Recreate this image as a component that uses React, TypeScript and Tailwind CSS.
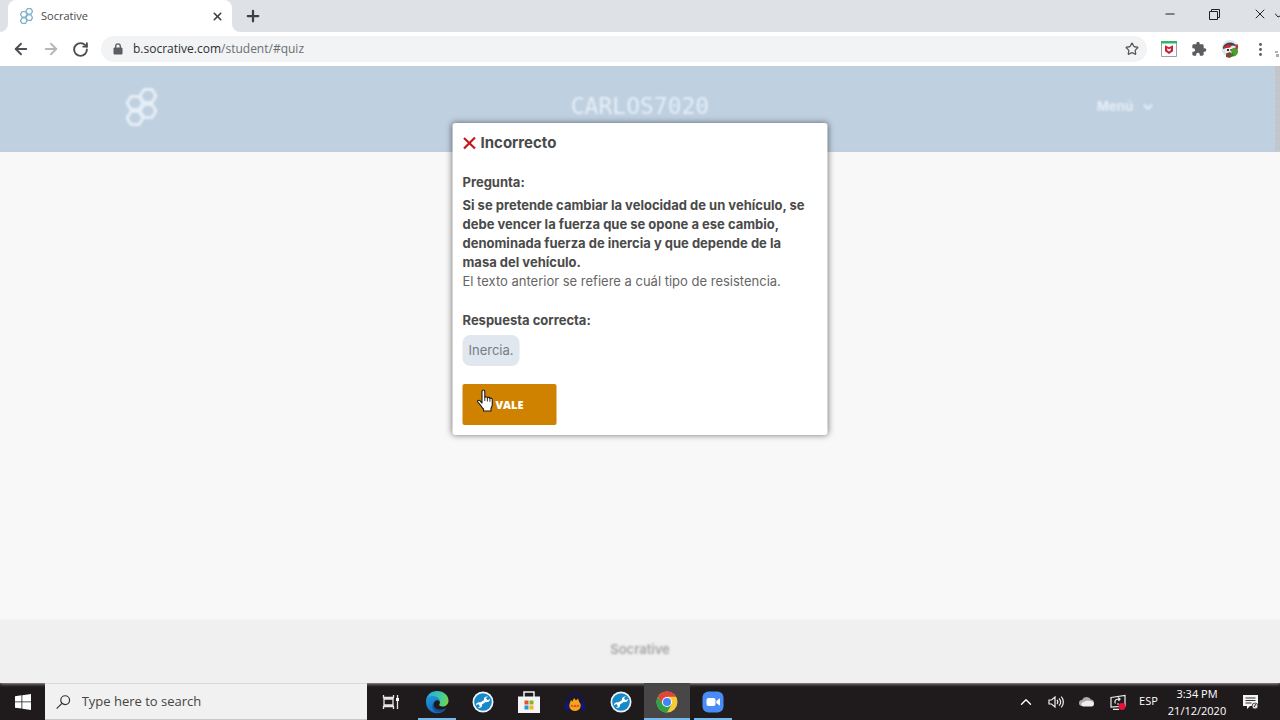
import type { ReactNode } from 'react';
import { ArrowLeft, ArrowRight, ChevronDown, ChevronUp, Minus, Plus, RotateCw, Star, X } from 'lucide-react';

const HexLogo = ({ className }: { className: string }) => {
  const cells = [
    { x: 22, y: 8 },
    { x: 9, y: 15 },
    { x: 22, y: 23 },
    { x: 9, y: 30 }
  ];
  return (
    <svg viewBox="0 0 31 38" className={className} fill="none" stroke="currentColor" strokeWidth="3" strokeLinejoin="round">
      {cells.map((cell, index) => (
        <path key={index} d={`M${cell.x - 4} ${cell.y - 6.5}h8l4 6.5-4 6.5h-8l-4-6.5z`} />
      ))}
    </svg>
  );
};

const EdgeIcon = () => (
  <svg viewBox="0 0 24 24" className="size-6">
    <defs>
      <linearGradient id="edgeTop" x1="0" y1="0.3" x2="1" y2="0.5">
        <stop offset="0" stopColor="#2ba6dc" />
        <stop offset="0.55" stopColor="#38c5b0" />
        <stop offset="1" stopColor="#6fd650" />
      </linearGradient>
      <linearGradient id="edgeLow" x1="0" y1="0" x2="0.6" y2="1">
        <stop offset="0" stopColor="#1c9ade" />
        <stop offset="1" stopColor="#1665b8" />
      </linearGradient>
    </defs>
    <path d="M1 11C1.500 5 6 1 12 1c7 0 11.500 4.500 11.500 9.500 0 4-3 6-6 6-2.500 0-4-1-3-2.500 1-1.300.5-5-4-5C7 9 2 8 1 11z" fill="url(#edgeTop)" />
    <path d="M1 12c0-4 3-6 6.500-6 4.500 0 7.500 3 7.500 6C13.500 9.500 9.500 9.500 8.500 14c-.3 5 4 6.500 8 6 2-.3 3.500-1 5-2-2 3.500-5.500 5.200-9.500 5.200C5.500 23.200 1 18 1 12z" fill="url(#edgeLow)" />
    <path d="M8.500 13.500c-.5 5.500 6 8 13 4.500-3 3.800-7.500 5.300-11 3.500-3.500-2.500-4.500-7.500-.5-10.500-1 .8-1.400 1.500-1.500 2.500z" fill="#12509a" />
  </svg>
);

const WrenchIcon = () => (
  <svg viewBox="0 0 22 22" className="size-[22px]">
    <circle cx="11" cy="11" r="10.500" fill="#f2f6f8" />
    <circle cx="11" cy="11" r="8.800" fill="#1789c9" />
    <path d="M7 13.800 15 8.700" stroke="#fff" strokeWidth="2.600" />
    <path d="M18 7.800 15.800 9.300 14 8.800 13.900 7l2.200-1.500c-2.300-.5-4.300.8-4.200 2.900.1 1.900 1.700 3 3.500 2.700 1.700-.3 2.700-1.600 2.600-3.300z" fill="#fff" />
    <path d="M4 14.500 6.200 13l1.800.5.100 1.800-2.200 1.500c2.300.5 4.300-.8 4.200-2.900-.1-1.900-1.700-3-3.500-2.700-1.700.3-2.700 1.600-2.600 3.300z" fill="#fff" />
  </svg>
);

const StoreIcon = () => (
  <svg viewBox="0 0 22 24" className="h-6 w-[22px]">
    <path d="M6 7V2h10v5" fill="none" stroke="#f4f4f4" strokeWidth="1.500" />
    <path d="M0 6.500h22V23H0z" fill="#f4f4f4" />
    <path d="M6.500 10.500h4v4h-4z" fill="#e8502a" />
    <path d="M11.500 10.500h4v4h-4z" fill="#7cb928" />
    <path d="M6.500 15.500h4v4h-4z" fill="#2399d8" />
    <path d="M11.500 15.500h4v4h-4z" fill="#f5b81c" />
  </svg>
);

const HeadphonesIcon = () => (
  <svg viewBox="0 0 22 20" className="h-5 w-[22px]">
    <path d="M4 14C2 6 6 2 11 2s9 4 7 12" fill="none" stroke="#12126a" strokeWidth="1.600" />
    <rect x="1" y="10" width="4" height="9" rx="2" fill="#14147c" />
    <rect x="17" y="10" width="4" height="9" rx="2" fill="#14147c" />
    <path d="M5.500 12 7 8l1.500 1.500L10 6l2 2.500L14 6.500l1 3 1.500 2.500c1 4-2 7-5.500 7s-6.500-3-5.500-7z" fill="#f7a51b" />
    <path d="M6.500 13.500 8 12.500l1.500 1.500L11 12.500l1.500 1.500 1.500-1.500 1.500 1-1 1.500-1.500-.5-2 .8-2-.8-1.500.5z" fill="#e4501c" />
  </svg>
);

const ChromeIcon = () => (
  <svg viewBox="0 0 22 22" className="size-[22px]">
    <circle cx="11" cy="11" r="10.500" fill="#f9c936" />
    <path d="M11 11 1.900 5.750A10.500 10.500 0 0 1 20.100 5.750H11z" fill="#e0443a" />
    <path d="M1.900 5.750A10.500 10.500 0 0 0 11 21.500l4.500-8L11 11 6.500 13.500z" fill="#2ba24c" />
    <path d="M1.900 5.750 6.500 13.500 11 11 8 6z" fill="#e0443a" />
    <circle cx="11" cy="11" r="5" fill="#fff" />
    <circle cx="11" cy="11" r="4" fill="#4285f4" />
  </svg>
);

const ZoomIcon = () => (
  <svg viewBox="0 0 22 22" className="size-[22px]">
    <rect x="0.500" y="0.500" width="21" height="21" rx="6" fill="#4a8cf7" />
    <rect x="4.500" y="7" width="9" height="8" rx="2" fill="#fff" />
    <path d="M14.300 10 18 7.300v7.400L14.300 12z" fill="#fff" />
  </svg>
);

const TaskViewIcon = () => (
  <svg viewBox="0 0 18 16" className="h-4 w-[18px]" fill="none" stroke="#e6e6e6" strokeWidth="1.300">
    <path d="M1.500 1v2.500h10V1M1.500 15v-2.500h10V15M2 5h9v6H2zM15.500 1v14" />
    <path d="M14 4h3v3h-3z" fill="#fff" stroke="none" />
  </svg>
);

const PuzzleIcon = () => (
  <svg viewBox="0 0 24 24" className="size-4" fill="#5a5d61">
    <path d="M20.500 11H19V7c0-1.100-.9-2-2-2h-4V3.500a2.500 2.500 0 0 0-5 0V5H4c-1.100 0-2 .9-2 2v3.800h1.500a2.700 2.700 0 0 1 0 5.400H2V20c0 1.100.9 2 2 2h3.800v-1.500a2.700 2.700 0 0 1 5.400 0V22H17c1.100 0 2-.9 2-2v-4h1.500a2.500 2.500 0 0 0 0-5z" />
  </svg>
);

const AvatarIcon = () => (
  <svg viewBox="0 0 18 20" className="h-5 w-[18px]">
    <circle cx="9" cy="9.500" r="8.500" fill="#dbe6ee" />
    <path d="M2 8c1-3 4-4.500 7-4.500S14 5 15 7l-4-.5L7 8 2 10z" fill="#394250" />
    <path d="M3 7.500 8 5l3 1.500-2 2-6 1z" fill="#c8252f" />
    <path d="M5 9h6l1 3-2 3H6l-2-3z" fill="#f1efe8" />
    <path d="M6 10h2v2H6zM9.500 10H11v2H9.500z" fill="#2c3236" />
    <path d="M10 11c2-3 7-3 7 1s-3 6-6 5z" fill="#4d9d31" />
    <path d="M14 5.500h3v4l-2 1z" fill="#c0332f" />
    <path d="M5 14.500 9 13l3 3-3 3-4-1z" fill="#874137" />
    <path d="m8 16 4-2 1 3-3 1z" fill="#327b2a" />
  </svg>
);

const HandCursor = () => (
  <svg viewBox="0 0 17 23" className="pointer-events-none absolute left-[14px] top-[5px] h-[23px] w-[17px]">
    <path
      d="M5.500 14V2.500C5.500.5 8.300.5 8.300 2.500v6c.6-1.200 2.500-1 2.600.4.700-1 2.400-.6 2.500.6.900-.7 2.400-.2 2.400 1.200v5c0 1.600-.8 2.400-1.300 3.600V22H7v-2c-1-.8-1.800-1.800-2.600-3.300L1.300 13.200c-.9-1.300.8-2.600 2-1.500z"
      fill="#fff"
      stroke="#1a1a1a"
      strokeWidth="1.100"
      strokeLinejoin="round"
    />
    <path d="M8.300 8.500V12M10.900 9v3.500M13.400 9.700v3" stroke="#1a1a1a" strokeWidth="0.900" />
  </svg>
);

const taskbarApps: { name: string; icon: ReactNode; className?: string; underline?: string }[] = [
  { name: 'Microsoft Edge', icon: <EdgeIcon />, underline: 'inset-x-1' },
  { name: 'Support Assist', icon: <WrenchIcon /> },
  { name: 'Microsoft Store', icon: <StoreIcon /> },
  { name: 'Audacity', icon: <HeadphonesIcon /> },
  { name: 'PC Tools', icon: <WrenchIcon /> },
  { name: 'Google Chrome', icon: <ChromeIcon />, className: 'bg-[#484646]', underline: 'inset-x-0' },
  { name: 'Zoom', icon: <ZoomIcon />, underline: 'inset-x-1' }
];

const TabStrip = () => (
  <div className="relative flex h-8 items-center bg-[#dee1e6] pl-2">
    <div className="relative flex h-8 w-56 items-center rounded-t-lg bg-white pl-3 pr-2">
      <svg viewBox="0 0 8 8" className="absolute -left-2 bottom-0 size-2" fill="#fff">
        <path d="M8 0v8H0a8 8 0 0 0 8-8z" />
      </svg>
      <svg viewBox="0 0 8 8" className="absolute -right-2 bottom-0 size-2" fill="#fff">
        <path d="M0 0v8h8a8 8 0 0 1-8-8z" />
      </svg>
      <HexLogo className="h-4 w-[13px] text-[#7fb2cc]" />
      <span className="ml-2 flex-1 text-[11px] text-[#45494d]">Socrative</span>
      <button aria-label="Close tab">
        <X size={13} strokeWidth={3} className="text-[#3c4043]" />
      </button>
    </div>
    <button aria-label="New tab" className="ml-3">
      <Plus size={18} strokeWidth={3} className="text-[#3c4043]" />
    </button>
    <div className="ml-auto flex items-center gap-8 pb-1 pr-3 text-[#222]">
      <button aria-label="Minimize">
        <Minus size={14} strokeWidth={2} />
      </button>
      <button aria-label="Restore">
        <svg viewBox="0 0 11 11" className="size-[11px]" fill="none" stroke="currentColor">
          <path d="M.5 2.500h8v8h-8zM2.500 2.500v-2h8v8h-2" />
        </svg>
      </button>
      <button aria-label="Close">
        <X size={16} strokeWidth={1.500} />
      </button>
    </div>
    <svg viewBox="0 0 5 5" className="absolute right-0 top-[13px] size-[5px]" fill="none" stroke="#222">
      <path d="m0 .5 3 3.500 2-1" />
    </svg>
  </div>
);

const Toolbar = () => (
  <div className="relative flex h-[34px] items-center bg-white px-3">
    <div className="flex items-center gap-3 text-[#4b4f53]">
      <button aria-label="Back">
        <ArrowLeft size={18} strokeWidth={2.500} />
      </button>
      <button aria-label="Forward" className="text-[#b5b8bb]">
        <ArrowRight size={18} strokeWidth={2.500} />
      </button>
      <button aria-label="Reload">
        <RotateCw size={17} strokeWidth={2.700} />
      </button>
    </div>
    <div className="ml-3 flex h-[26px] flex-1 items-center rounded-full bg-[#f1f3f4] pl-3 pr-2">
      <svg viewBox="0 0 10 12" className="h-3 w-[10px]">
        <path d="M1 5h8v6H1z" fill="#5a5d61" stroke="#5a5d61" strokeLinejoin="round" />
        <path d="M2.700 5V3.200a2.300 2.300 0 0 1 4.600 0V5" fill="none" stroke="#5a5d61" strokeWidth="1.300" />
      </svg>
      <span className="ml-[10px] flex-1 text-[12px] text-[#6b6f73]">
        <span className="text-[#2d3033]">b.socrative.com</span>/student/#quiz
      </span>
      <button aria-label="Bookmark this page">
        <Star size={14} strokeWidth={2.200} className="text-[#55585c]" />
      </button>
    </div>
    <div className="ml-[14px] flex items-center gap-[14px]">
      <button aria-label="McAfee WebAdvisor">
        <svg viewBox="0 0 16 16" className="size-4">
          <path d="M.5.500h15v15H.5z" fill="#fff" stroke="#9da0a3" />
          <path d="M0 0h16v2.500H0z" fill="#2eb567" />
          <path d="M4 4.300 8 6.300l4-2v6L8 13l-4-2.700z" fill="#c9203c" />
          <path d="M6.200 7.200 8 8.200l1.800-1V9.300L8 10.400 6.200 9.300z" fill="#fff" />
        </svg>
      </button>
      <button aria-label="Extensions">
        <PuzzleIcon />
      </button>
      <button aria-label="Profile">
        <AvatarIcon />
      </button>
      <button aria-label="Browser menu" className="px-[6px]">
        <svg viewBox="0 0 3 13" className="h-[13px] w-[3px]" fill="#55585c">
          <circle cx="1.500" cy="1.500" r="1.400" />
          <circle cx="1.500" cy="6.500" r="1.400" />
          <circle cx="1.500" cy="11.500" r="1.400" />
        </svg>
      </button>
    </div>
    <svg viewBox="0 0 5 8" className="absolute right-0 top-[18px] h-2 w-[5px]">
      <path d="M0 1h3v2H0z" fill="#a9b4cc" />
      <path d="M1 4h3v3H1z" fill="#b3aaa0" />
    </svg>
  </div>
);

const ResultDialog = () => (
  <div
    role="dialog"
    aria-labelledby="result-title"
    className="absolute left-1/2 top-[57px] w-[375px] -translate-x-1/2 rounded-[3px] bg-white px-[10px] pb-[10px] pt-2 text-[13px] leading-[19px] text-[#4a4a4a] shadow-[0_0_6px_rgba(0,0,0,0.55)]"
  >
    <h2 id="result-title" className="flex items-center gap-1 text-[15px] font-bold leading-6">
      <svg viewBox="0 0 14 14" className="size-[14px]" fill="none" stroke="#c4161c" strokeWidth="2.200">
        <path d="M1.500 2 12.500 12.500M12.500 1.500 1.500 12.500" />
      </svg>
      Incorrecto
    </h2>
    <p className="mt-[18px] font-bold">Pregunta:</p>
    <p className="mt-1 font-bold">
      Si se pretende cambiar la velocidad de un vehículo, se debe vencer la fuerza que se opone a ese cambio, denominada
      fuerza de inercia y que depende de la masa del vehículo.
    </p>
    <p className="text-[#666]">El texto anterior se refiere a cuál tipo de resistencia.</p>
    <p className="mt-5 font-bold">Respuesta correcta:</p>
    <p className="mt-[5px] w-fit rounded-lg bg-[#e0e7ee] p-[6px] text-[#757d88]">Inercia.</p>
    <div className="relative mt-[18px] w-fit">
      <button className="block h-[41px] w-[94px] rounded-[2px] bg-[#cf8100] font-['Open_Sans'] text-[11px] font-extrabold text-white">
        VALE
      </button>
      <HandCursor />
    </div>
  </div>
);

const Taskbar = () => (
  <div className="flex h-[37px] items-stretch bg-[#1f1b1d] text-white">
    <button aria-label="Start" className="flex w-[45px] items-center justify-center">
      <svg viewBox="0 0 16 16" className="size-4" fill="#fff">
        <path d="M0 2.200 6.500 1.300v6.200H0zM7.300 1.200 16 0v7.500H7.300zM0 8.300h6.500v6.300L0 13.700zM7.300 8.300H16V16l-8.700-1.200z" />
      </svg>
    </button>
    <label className="flex w-[322px] items-center border-y border-[#c9c9c9] bg-[#f1f1f1] pl-[11px]">
      <svg viewBox="0 0 16 16" className="size-4" fill="none" stroke="#333" strokeWidth="1.300">
        <circle cx="10" cy="6" r="4.800" />
        <path d="M6.500 9.500.700 15.300" />
      </svg>
      <input
        type="text"
        aria-label="Search"
        placeholder="Type here to search"
        className="ml-[11px] w-full bg-transparent text-[13px] outline-none placeholder:text-[#444]"
      />
    </label>
    <button aria-label="Task View" className="flex w-[47px] items-center justify-center">
      <TaskViewIcon />
    </button>
    {taskbarApps.map((app) => (
      <button
        key={app.name}
        aria-label={app.name}
        className={`relative flex w-[46px] items-center justify-center ${app.className ?? ''}`}
      >
        {app.icon}
        {app.underline && <span className={`absolute bottom-0 h-[2px] bg-[#76b9ed] ${app.underline}`} />}
      </button>
    ))}
    <div className="ml-auto flex items-center pr-[21px]">
      <button aria-label="Show hidden icons" className="flex w-[30px] justify-center">
        <ChevronUp size={18} strokeWidth={1.800} />
      </button>
      <button aria-label="Volume" className="flex w-[30px] justify-center">
        <svg viewBox="0 0 17 14" className="h-[14px] w-[17px]" fill="none" stroke="#eee" strokeWidth="1.200">
          <path d="M1 5h2.500L7 2v10L3.500 9H1zM9 5c1 1.200 1 2.800 0 4M11 3.300c2 2.200 2 5.200 0 7.400M13.200 1.700c2.900 3 2.900 7.600 0 10.600" />
        </svg>
      </button>
      <button aria-label="OneDrive" className="flex w-[31px] justify-center">
        <svg viewBox="0 0 16 11" className="h-[11px] w-4">
          <path d="M3 10a3 3 0 0 1 0-6 5 5 0 0 1 9-.5A3.400 3.400 0 0 1 13 10z" fill="#ababab" />
          <path d="M4 10.500a2.300 2.300 0 0 1-.3-4.300L8 4.500l5 .8a2.700 2.700 0 0 1 0 5.200z" fill="#ededed" />
        </svg>
      </button>
      <button aria-label="Windows Update" className="flex w-[31px] justify-center">
        <svg viewBox="0 0 16 16" className="size-4" fill="none" stroke="#eee" strokeWidth="1.200">
          <path d="M1 3.500 15 1.500V12L1 13zM3 15.300h6M5.500 9.500a2.600 2.600 0 0 1 1-4l3-.5M8 3.500 10 5 8.500 6.800M7 10h2" />
          <circle cx="12" cy="12.500" r="3.400" fill="#e81137" stroke="none" />
        </svg>
      </button>
      <button className="w-[31px] text-center text-[11px]">ESP</button>
      <button className="w-[66px] whitespace-nowrap text-center text-[11px] leading-[17px]">
        3:34 PM
        <br />
        21/12/2020
      </button>
      <button aria-label="Notifications" className="ml-3">
        <svg viewBox="0 0 17 16" className="h-4 w-[17px]">
          <path d="M1 1h15v11H8l-3 3v-3H1z" fill="#f4f4f4" />
          <path d="M3.500 4h10M3.500 6.500h10M3.500 9h6" stroke="#333" />
          <circle cx="13" cy="12" r="3" fill="#ddd" stroke="#333" strokeWidth="0.800" />
          <path d="m12 13 2-3" stroke="#333" />
        </svg>
      </button>
    </div>
  </div>
);

export default function App() {
  return (
    <div className="flex min-h-screen flex-col bg-[#f8f8f8] font-['Open_Sans','Noto_Sans',sans-serif]">
      <TabStrip />
      <Toolbar />
      <div className="relative flex flex-1 flex-col font-['Inter',sans-serif]">
        <header className="relative grid h-[86px] grid-cols-3 items-center border-b border-[#c6ccd2] bg-[#bfd0e0] px-[125px] pb-1 text-[#e6eff7]">
          <HexLogo className="h-[38px] w-[33px] blur-[1px]" />
          <h1 className="text-center font-['DejaVu_Sans_Mono',monospace] text-[23px] blur-[1px]">CARLOS7020</h1>
          <button className="ml-auto flex items-center gap-2 text-[13px] font-bold blur-[1px]">
            Menú
            <ChevronDown size={14} strokeWidth={4} />
          </button>
          <div className="absolute inset-y-0 right-0 w-[5px] bg-[repeating-linear-gradient(#c9c4c2_0_2px,#bccad6_2px_4px)]" />
        </header>
        <main className="flex-1">
          <ResultDialog />
        </main>
        <footer className="flex h-[63px] items-center justify-center bg-[#f0f0f0] pb-1 text-[13px] font-semibold text-[#a3a3a3] shadow-[0_0_4px_#f0f0f0]">
          <span className="blur-[1px]">Socrative</span>
        </footer>
      </div>
      <Taskbar />
    </div>
  );
}
